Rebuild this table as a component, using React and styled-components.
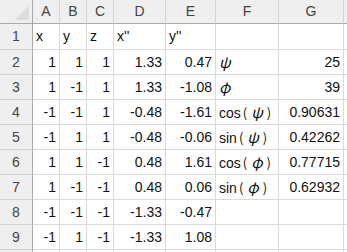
import React from 'react'
import styled, { createGlobalStyle } from 'styled-components'

const GlobalStyle = createGlobalStyle`
  html, body {
    margin: 0;
    padding: 0;
    background: #fff;
    overflow: hidden;
  }
  body {
    font-family: 'Liberation Sans', Arial, 'Noto Sans CJK JP', sans-serif;
  }
`

const COLS = ['A', 'B', 'C', 'D', 'E', 'F', 'G', 'H']

const Sheet = styled.div`
  display: grid;
  grid-template-columns: 33px 27px 27px 27px 52px 50px 63px 65px 80px;
  grid-template-rows: 24px 26px repeat(9, 25px);
  width: 347px;
  height: 252px;
  overflow: hidden;
`

const Corner = styled.div`
  position: relative;
  background: #efefef;
  border-right: 1px solid #a9a9a9;
  border-bottom: 1px solid #a9a9a9;
  box-sizing: border-box;
`

const CornerMark = styled.div`
  position: absolute;
  right: 3px;
  bottom: 3px;
  width: 0;
  height: 0;
  border-left: 14px solid transparent;
  border-bottom: 14px solid #dcdcdc;
`

const ColHead = styled.div`
  background: #efefef;
  border-right: 1px solid ${(p) => (p.$last ? '#efefef' : '#d5d5d5')};
  border-bottom: 1px solid #a9a9a9;
  box-sizing: border-box;
  color: #444;
  font-size: 14px;
  line-height: 23px;
  text-align: center;
`

const RowHead = styled.div`
  background: #efefef;
  border-right: 1px solid #a9a9a9;
  border-bottom: 1px solid #d5d5d5;
  box-sizing: border-box;
  color: #444;
  font-size: 14px;
  line-height: 24px;
  text-align: center;
`

const Cell = styled.div`
  border-right: 1px solid #dadada;
  border-bottom: 1px solid #dadada;
  box-sizing: border-box;
  color: #111;
  font-size: 14px;
  line-height: 24px;
  padding: 0 3px 0 3px;
  text-align: ${(p) => (p.$num ? 'right' : 'left')};
  white-space: nowrap;
  overflow: hidden;
`

const Greek = styled.span`
  font-family: 'Noto Sans CJK JP', 'DejaVu Sans', sans-serif;
  font-style: italic;
  font-size: 15px;
`

const Paren = styled.span`
  font-family: 'Noto Sans CJK JP', sans-serif;
  font-size: 13px;
  margin: ${(p) => (p.$open ? '0 4px 0 2px' : '0 0 0 4px')};
`

const psi = 'ψ'
const phi = 'φ'

const Fn = ({ name, sym }) => (
  <>
    {name}
    <Paren $open>(</Paren>
    <Greek>{sym}</Greek>
    <Paren>)</Paren>
  </>
)

const rows = [
  ['x', 'y', 'z', "x''", "y''", '', ''],
  [1, 1, 1, '1.33', '0.47', <Greek>{psi}</Greek>, 25],
  [1, -1, 1, '1.33', '-1.08', <Greek>{phi}</Greek>, 39],
  [-1, -1, 1, '-0.48', '-1.61', <Fn name="cos" sym={psi} />, '0.90631'],
  [-1, 1, 1, '-0.48', '-0.06', <Fn name="sin" sym={psi} />, '0.42262'],
  [1, 1, -1, '0.48', '1.61', <Fn name="cos" sym={phi} />, '0.77715'],
  [1, -1, -1, '0.48', '0.06', <Fn name="sin" sym={phi} />, '0.62932'],
  [-1, -1, -1, '-1.33', '-0.47', '', ''],
  [-1, 1, -1, '-1.33', '1.08', '', ''],
  ['', '', '', '', '', '', ''],
]

const isNum = (v) => typeof v === 'number' || (typeof v === 'string' && /^-?[\d.]+$/.test(v))

export default function App() {
  return (
    <>
      <GlobalStyle />
      <Sheet>
        <Corner>
          <CornerMark />
        </Corner>
        {COLS.map((c, i) => (
          <ColHead key={c} $last={i === COLS.length - 1}>
            {i === COLS.length - 1 ? '' : c}
          </ColHead>
        ))}
        {rows.map((row, r) => (
          <React.Fragment key={r}>
            <RowHead>{r < 9 ? r + 1 : ''}</RowHead>
            {row.map((v, c) => (
              <Cell key={c} $num={isNum(v)}>
                {v}
              </Cell>
            ))}
            <Cell />
          </React.Fragment>
        ))}
      </Sheet>
    </>
  )
}
